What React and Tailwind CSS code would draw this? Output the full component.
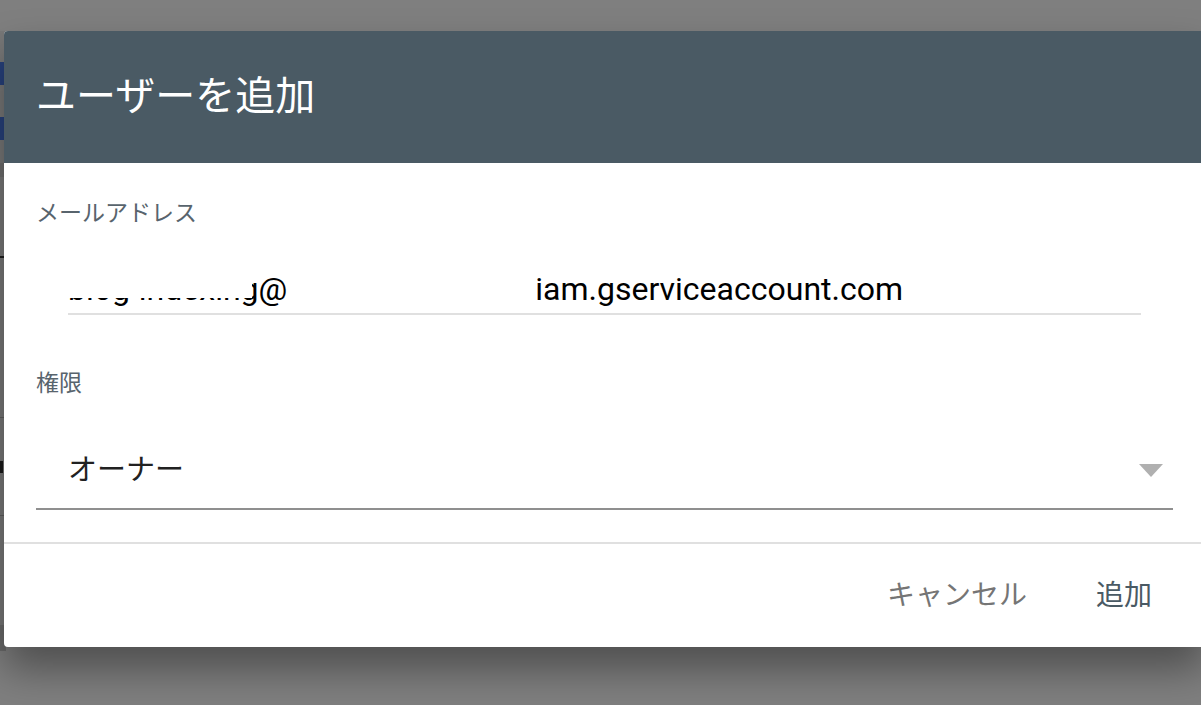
function Backdrop() {
  // the page behind the overlay, only its left edge peeks out
  return (
    <div className="absolute inset-0 bg-[#7f7f7f] pt-[31px]">
      <div className="w-[6px] h-[620px] bg-[#787878] flex flex-col">
        <div className="h-[31px]" />
        <div className="h-[23px] bg-[#27417c]" />
        <div className="h-[32px]" />
        <div className="h-[23px] bg-[#27417c]" />
        <div className="h-[23px]" />
        <div className="h-[14px] bg-[#6e6e6e]" />
        <div className="h-[79px]" />
        <div className="h-[2px] bg-[#1f1f1f]" />
        <div className="h-[159px]" />
        <div className="h-px bg-[#5e5e5e]" />
        <div className="h-[43px]" />
        <div className="w-[3px] h-[12px] bg-[#1a1a1a]" />
        <div className="h-[42px]" />
        <div className="h-px bg-[#5e5e5e]" />
        <div className="h-[109px]" />
        <div className="h-[26px] bg-[#6a6a6a]" />
      </div>
    </div>
  );
}

function Arrow() {
  return (
    <svg width="24" height="13" viewBox="0 0 24 13" className="shrink-0">
      <polygon points="0,0 24,0 12,13" fill="#b0b0b0" />
    </svg>
  );
}

export default function App() {
  return (
    <div className="relative w-[1201px] h-[705px] overflow-hidden font-['Roboto','Noto_Sans_CJK_JP',sans-serif]">
      <Backdrop />

      {/* DIALOG */}
      <div className="absolute left-[4px] top-[31px] w-[1201px] bg-white rounded-[4px] overflow-hidden shadow-[0_22px_40px_rgba(0,0,0,0.38)]">
        <div className="h-[132px] bg-[#4a5a64] flex items-center pl-[32px]">
          <h1 className="text-white text-[40px] leading-none font-normal">ユーザーを追加</h1>
        </div>

        <div className="px-[32px] pt-[31px]">
          <div className="h-[40px] flex items-center text-[23px] text-[#58646d]">メールアドレス</div>

          {/* email input */}
          <div className="mx-[32px] h-[81px] flex items-end pb-[4px] border-b-2 border-[#e0e0e0]">
            <div className="relative flex text-[32px] leading-[40px] text-black whitespace-nowrap">
              <span>blog-indexing@</span>
              <span className="w-[248px]" />
              <span>iam.gserviceaccount.com</span>
              {/* redaction */}
              <div className="absolute left-[-4px] top-0 w-[188px] h-[29px] bg-white" />
            </div>
          </div>

          <div className="mt-[49px] h-[40px] flex items-center text-[23px] text-[#58646d]">権限</div>

          {/* role select */}
          <div className="h-[106px] flex items-end pb-[18px] border-b-2 border-[#8f8f8f] pl-[32px] pr-[10px]">
            <div className="flex-1 h-[40px] flex items-center justify-between">
              <span className="text-[29px] leading-[40px] text-[#212121]">オーナー</span>
              <Arrow />
            </div>
          </div>
        </div>

        <div className="mt-[32px] border-t-2 border-[#e0e0e0] h-[105px] flex items-center justify-end gap-[37px] pr-[37px]">
          <button className="px-4 text-[28px] text-[#757575]">キャンセル</button>
          <button className="px-4 text-[28px] text-[#4a5a64]">追加</button>
        </div>
      </div>
    </div>
  );
}
